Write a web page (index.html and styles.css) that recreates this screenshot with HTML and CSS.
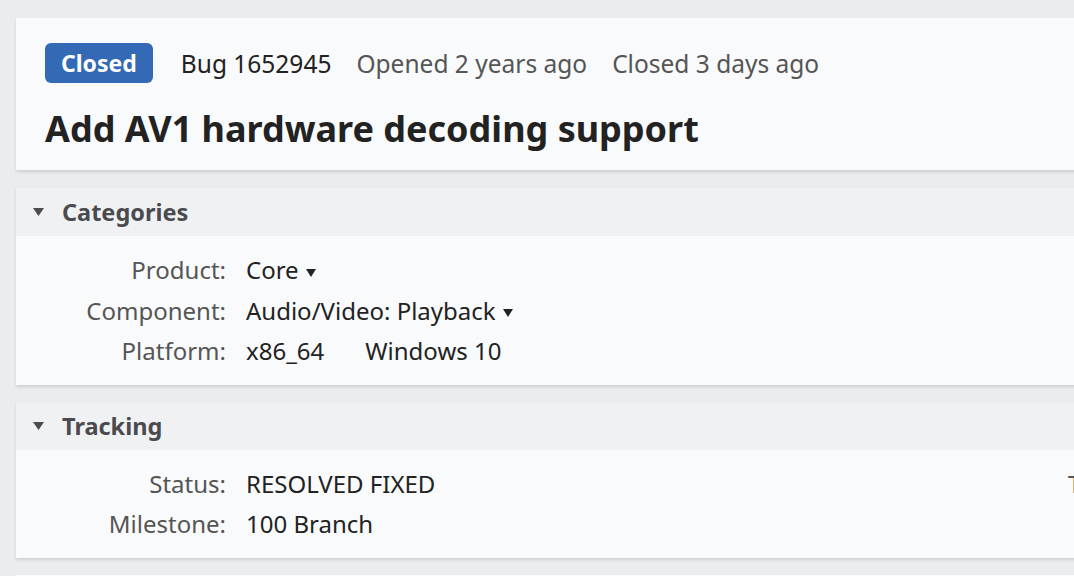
FILE: index.html
```html
<!DOCTYPE html>
<html lang="en">
<head>
  <meta charset="UTF-8" />
  <title>Bug 1652945 - Add AV1 hardware decoding support</title>
  <link rel="stylesheet" href="styles.css">
</head>
<body>
  <main class="page">
    <section class="card summary">
      <div class="meta">
        <span class="badge">Closed</span>
        <span class="bug-id">Bug 1652945</span>
        <span class="when">Opened 2 years ago</span>
        <span class="when">Closed 3 days ago</span>
      </div>
      <h1 class="title">Add AV1 hardware decoding support</h1>
    </section>

    <section class="card">
      <h2 class="module-head">
        <svg class="caret" width="11" height="8" viewBox="0 0 11 8"><polygon points="0,0 11,0 5.5,8" fill="#4a4a4f"/></svg>
        Categories
      </h2>
      <div class="fields">
        <div class="label">Product:</div>
        <div class="value">Core <svg class="drop" width="10" height="8" viewBox="0 0 10 8"><polygon points="0,0 10,0 5,8" fill="#222"/></svg></div>
        <div class="label">Component:</div>
        <div class="value">Audio/Video: Playback <svg class="drop" width="10" height="8" viewBox="0 0 10 8"><polygon points="0,0 10,0 5,8" fill="#222"/></svg></div>
        <div class="label">Platform:</div>
        <div class="value"><span class="platform">x86_64</span><span>Windows 10</span></div>
      </div>
    </section>

    <section class="card">
      <h2 class="module-head">
        <svg class="caret" width="11" height="8" viewBox="0 0 11 8"><polygon points="0,0 11,0 5.5,8" fill="#4a4a4f"/></svg>
        Tracking
      </h2>
      <div class="split">
        <div class="fields">
          <div class="label">Status:</div>
          <div class="value">RESOLVED FIXED</div>
          <div class="label">Milestone:</div>
          <div class="value">100 Branch</div>
        </div>
        <div class="side">Type:</div>
      </div>
    </section>

    <section class="card stub"></section>
  </main>
</body>
</html>
```

FILE: styles.css
```css
body {
  margin: 0;
  background: #ebeced;
  font-family: "Noto Sans", "Open Sans", sans-serif;
  color: #222;
  overflow: hidden;
}
.page {
  padding: 18px 0 0 16px;
}
.card {
  background: #f9fafb;
  margin: 0 -40px 17px 0;
  box-shadow: 0 2px 3px rgba(0, 0, 0, 0.12);
}
.summary {
  padding: 25px 29px 17px;
  margin-bottom: 18px;
}
.meta {
  display: flex;
  align-items: center;
  font-size: 24.5px;
  height: 40px;
}
.badge {
  background: #3369b5;
  color: #fff;
  font-size: 23px;
  font-weight: 700;
  border-radius: 6px;
  padding: 0 16px;
  height: 40px;
  line-height: 40px;
  margin-right: 28px;
}
.bug-id {
  margin-right: 25px;
}
.when {
  color: #555;
  margin-right: 25px;
}
.title {
  margin: 22px 0 0;
  font-size: 36px;
  line-height: 48px;
  font-weight: 700;
  color: #222;
}
.module-head {
  margin: 0;
  height: 48px;
  background: #f0f1f2;
  display: flex;
  align-items: center;
  padding-left: 17px;
  font-size: 23.5px;
  font-weight: 700;
  color: #4a4a4f;
}
.caret {
  margin-right: 18px;
}
.fields {
  display: grid;
  grid-template-columns: 210px auto;
  column-gap: 20px;
  padding: 14px 0 13px;
  font-size: 24px;
  line-height: 40.5px;
}
.label {
  text-align: right;
  color: #555;
}
.value {
  color: #222;
}
.drop {
  vertical-align: middle;
  margin-left: 1px;
}
.platform {
  margin-right: 41px;
}
.split {
  display: flex;
  justify-content: space-between;
}
.side {
  padding-top: 14px;
  font-size: 24px;
  line-height: 40.5px;
  color: #555;
  width: 46px;
}
.stub {
  height: 20px;
}
```
